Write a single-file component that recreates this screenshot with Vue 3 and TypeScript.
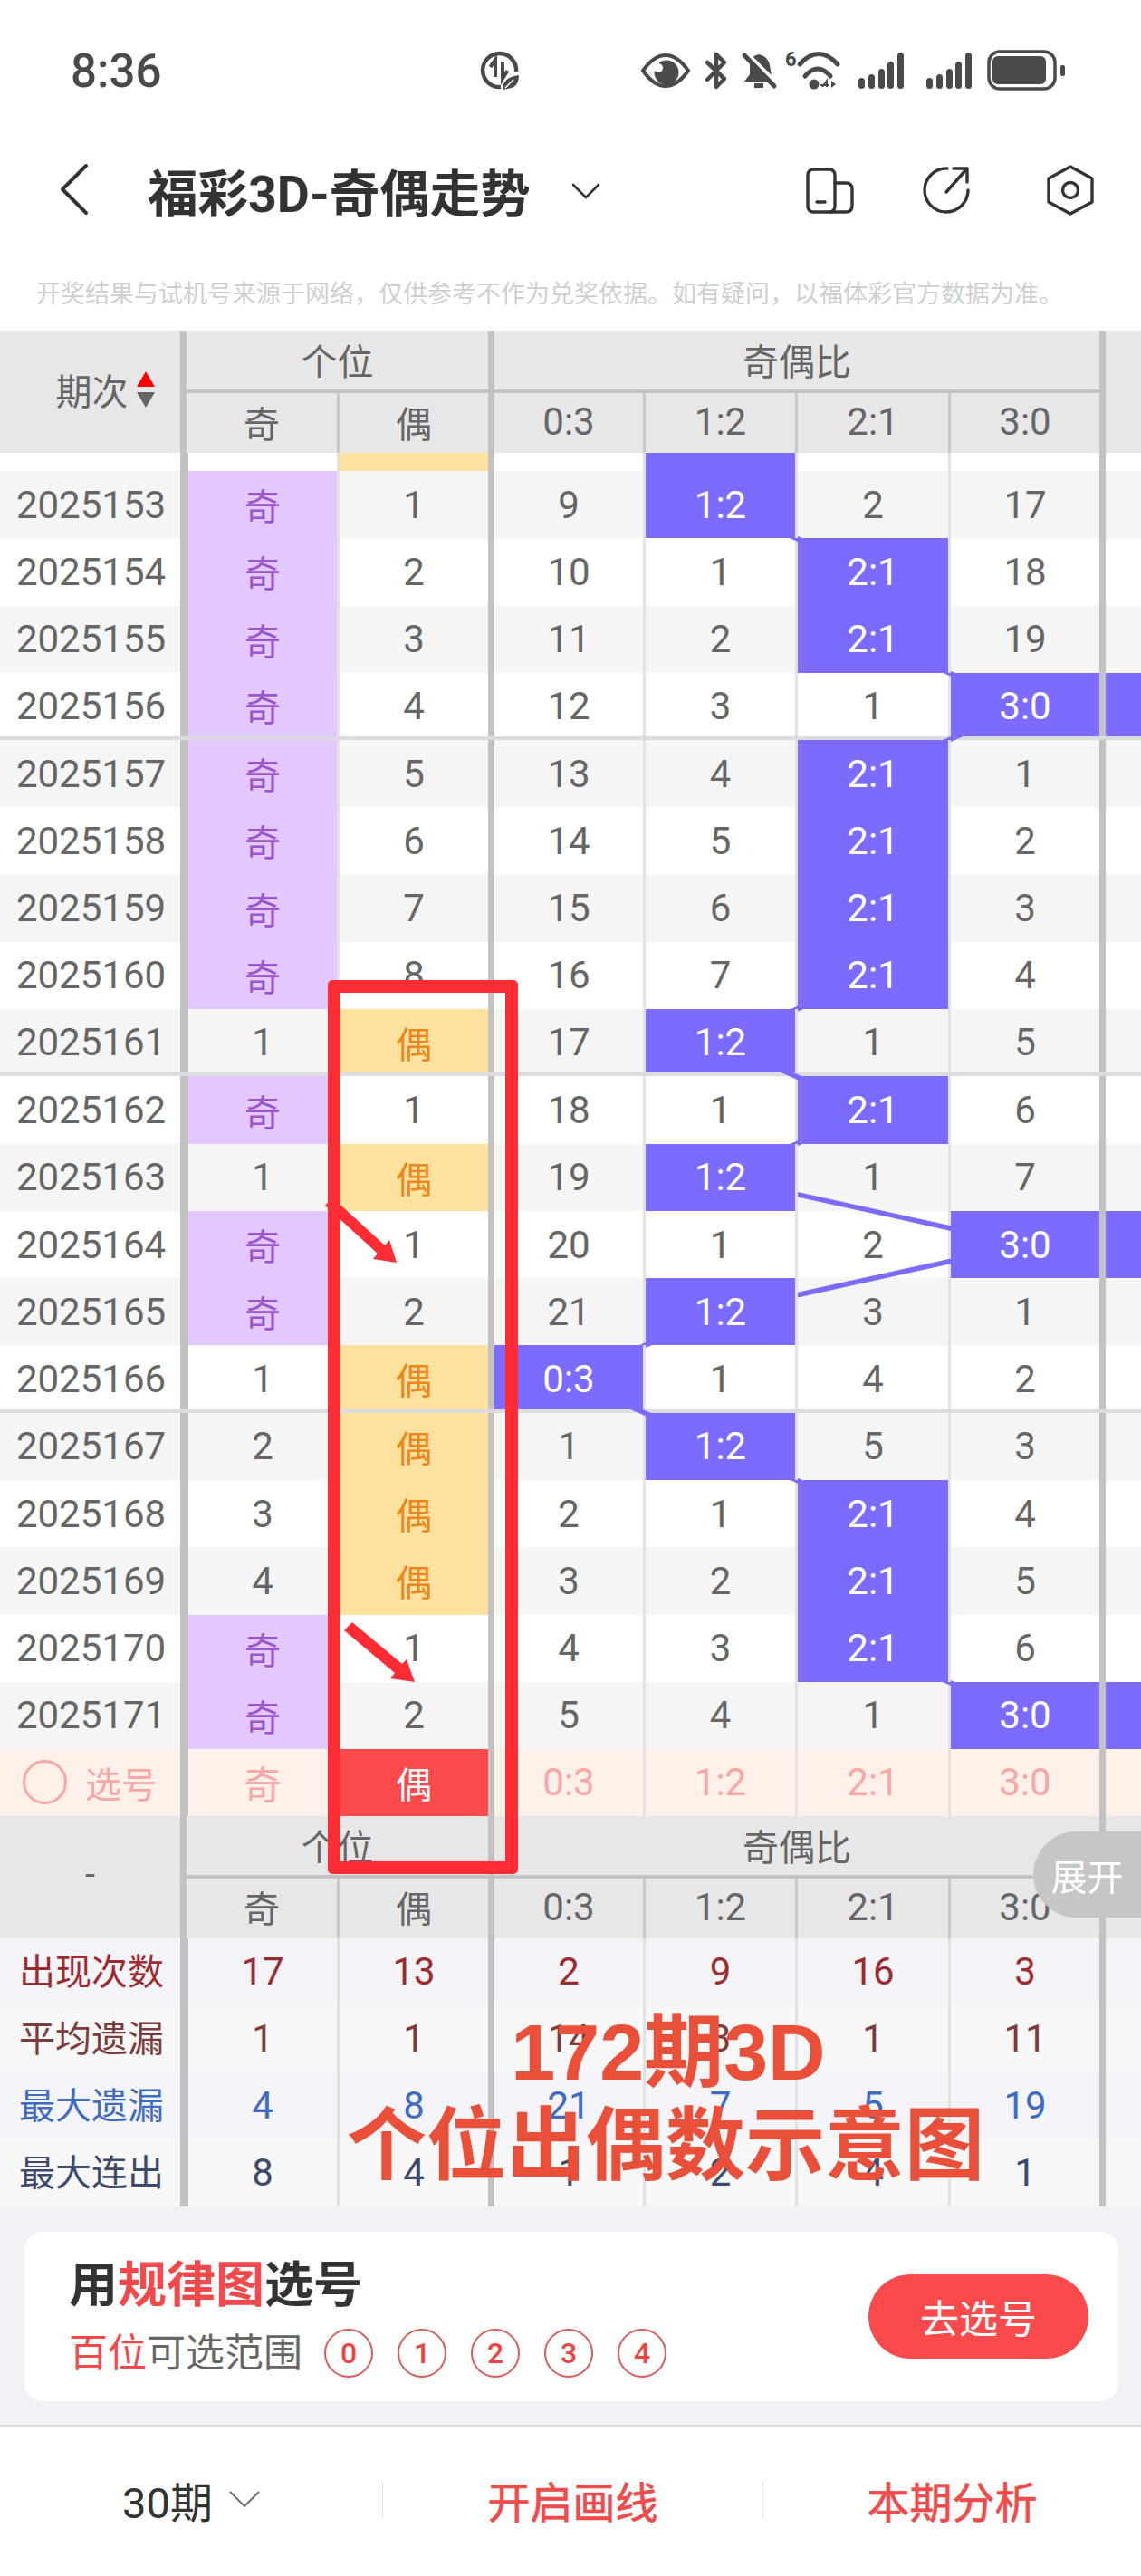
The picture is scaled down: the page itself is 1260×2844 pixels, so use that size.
<script setup lang="ts">
import { computed } from 'vue'

interface Row {
  p: number
  a: string
  b: string
  r: string[]
}

const rows: Row[] = [
  { p: 2025153, a: '奇', b: '1', r: ['9', '1:2', '2', '17'] },
  { p: 2025154, a: '奇', b: '2', r: ['10', '1', '2:1', '18'] },
  { p: 2025155, a: '奇', b: '3', r: ['11', '2', '2:1', '19'] },
  { p: 2025156, a: '奇', b: '4', r: ['12', '3', '1', '3:0'] },
  { p: 2025157, a: '奇', b: '5', r: ['13', '4', '2:1', '1'] },
  { p: 2025158, a: '奇', b: '6', r: ['14', '5', '2:1', '2'] },
  { p: 2025159, a: '奇', b: '7', r: ['15', '6', '2:1', '3'] },
  { p: 2025160, a: '奇', b: '8', r: ['16', '7', '2:1', '4'] },
  { p: 2025161, a: '1', b: '偶', r: ['17', '1:2', '1', '5'] },
  { p: 2025162, a: '奇', b: '1', r: ['18', '1', '2:1', '6'] },
  { p: 2025163, a: '1', b: '偶', r: ['19', '1:2', '1', '7'] },
  { p: 2025164, a: '奇', b: '1', r: ['20', '1', '2', '3:0'] },
  { p: 2025165, a: '奇', b: '2', r: ['21', '1:2', '3', '1'] },
  { p: 2025166, a: '1', b: '偶', r: ['0:3', '1', '4', '2'] },
  { p: 2025167, a: '2', b: '偶', r: ['1', '1:2', '5', '3'] },
  { p: 2025168, a: '3', b: '偶', r: ['2', '1', '2:1', '4'] },
  { p: 2025169, a: '4', b: '偶', r: ['3', '2', '2:1', '5'] },
  { p: 2025170, a: '奇', b: '1', r: ['4', '3', '2:1', '6'] },
  { p: 2025171, a: '奇', b: '2', r: ['5', '4', '1', '3:0'] }
]

const subHead = ['奇', '偶', '0:3', '1:2', '2:1', '3:0']

const stats = [
  { label: '出现次数', cls: 'st-red', v: ['17', '13', '2', '9', '16', '3'] },
  { label: '平均遗漏', cls: 'st-brown', v: ['1', '1', '14', '3', '1', '11'] },
  { label: '最大遗漏', cls: 'st-blue', v: ['4', '8', '21', '7', '5', '19'] },
  { label: '最大连出', cls: 'st-slate', v: ['8', '4', '1', '2', '4', '1'] }
]

const rowH = 74.28
const colX = [628, 795.5, 963.5, 1132]

// 走势线，穿过每行命中的格子中心
const trend = computed(() => {
  const pts = ['795.5,10']
  rows.forEach((row, i) => {
    const hit = row.r.findIndex((v) => v.includes(':'))
    pts.push(`${colX[hit]},${20 + i * rowH + rowH / 2}`)
  })
  return pts.join(' ')
})

const isHit = (v: string) => v.includes(':')
</script>

<template>
  <div class="page">
    <!-- 状态栏 -->
    <div class="status">
      <span class="time">8:36</span>
      <svg class="ic-data" width="50" height="48" viewBox="528 54 50 48" fill="none" stroke="#4a4a4a" stroke-width="4.5">
        <path d="M570 79 A18.5 18.5 0 1 0 553 96" />
        <path d="M547 85V66L541.5 74" stroke-width="4" />
        <path d="M555 68V87L560.5 78" stroke-width="4" />
        <path d="M555 99Q555 85 573 83Q573 97 560 98Z" fill="#4a4a4a" stroke="none" />
        <path d="M558 97L567 88" stroke="#fff" stroke-width="1.5" />
      </svg>
      <svg class="ic-cluster" width="485" height="50" viewBox="700 52 485 50" fill="none" stroke="#4a4a4a">
        <path d="M710 78Q722 61 735 61Q748 61 760 78Q748 95 735 95Q722 95 710 78Z" stroke-width="4" />
        <circle cx="736" cy="80" r="13.5" fill="#4a4a4a" stroke="none" />
        <circle cx="727" cy="75" r="5" fill="#fff" stroke="none" />
        <path d="M781 69L800 87L791 96V60L800 69L781 88" stroke-width="4.5" stroke-linejoin="round" stroke-linecap="round" />
        <path d="M822 90L828 82V72Q828 62 838 60Q848 62 850 72L853 90Z" fill="#4a4a4a" stroke="none" />
        <rect x="833" y="92" width="10" height="5" fill="#4a4a4a" stroke="none" />
        <path d="M826 60L858 92" stroke="#fff" stroke-width="4" />
        <path d="M822 61L855 95" stroke-width="5" stroke-linecap="round" />
        <text x="867" y="73" class="six">6</text>
        <path d="M883 71Q904 48 925 71" stroke-width="5" stroke-linecap="round" />
        <path d="M889 84Q903 68 917 84" stroke-width="5" stroke-linecap="round" />
        <circle cx="899" cy="93" r="5.5" fill="#4a4a4a" stroke="none" />
        <path d="M908 96L913 89V96M906 94H915" stroke-width="2" />
        <path d="M918 89V97L923 93Z" fill="#4a4a4a" stroke="none" />
        <g fill="#4a4a4a" stroke="none">
          <rect x="948" y="86" width="7" height="12" rx="3.5" />
          <rect x="959" y="82" width="7" height="16" rx="3.5" />
          <rect x="970" y="76" width="7" height="22" rx="3.5" />
          <rect x="980" y="68" width="7" height="30" rx="3.5" />
          <rect x="991" y="58" width="7" height="40" rx="3.5" />
          <rect x="1023" y="86" width="7" height="12" rx="3.5" />
          <rect x="1034" y="82" width="7" height="16" rx="3.5" />
          <rect x="1045" y="76" width="7" height="22" rx="3.5" />
          <rect x="1055" y="68" width="7" height="30" rx="3.5" />
          <rect x="1066" y="58" width="7" height="40" rx="3.5" />
          <rect x="1096" y="62" width="59" height="31" rx="6" />
          <rect x="1171" y="72" width="5" height="12" rx="2" />
        </g>
        <rect x="1092" y="57" width="73" height="41" rx="12" stroke-width="3.5" />
      </svg>
    </div>

    <!-- 导航 -->
    <div class="nav">
      <svg width="34" height="64" viewBox="66 180 34 64" fill="none" stroke="#333" stroke-width="4" stroke-linecap="round" stroke-linejoin="round">
        <path d="M95 185L69 211L95 237" />
      </svg>
      <div class="nav-title">福彩3D-奇偶走势</div>
      <svg width="34" height="24" viewBox="630 198 34 24" fill="none" stroke="#333" stroke-width="2.6" stroke-linecap="round" stroke-linejoin="round">
        <path d="M633 204L647 218L661 204" />
      </svg>
      <svg class="nav-actions" width="328" height="64" viewBox="885 180 328 64" fill="none" stroke="#333" stroke-width="3.4" stroke-linecap="round" stroke-linejoin="round">
        <rect x="892" y="189" width="30" height="47" rx="6" />
        <path d="M922 204H934Q941 204 941 211V229Q941 236 934 236H916" />
        <path d="M902 225H911" />
        <path d="M1046 188A24 24 0 1 0 1069 212" />
        <path d="M1045 214L1068 188M1053 188H1068V203" />
        <path d="M1182 186L1206 199V225L1182 238L1158 225V199Z" />
        <circle cx="1182" cy="212" r="8.5" />
      </svg>
    </div>

    <div class="notice">开奖结果与试机号来源于网络，仅供参考不作为兑奖依据。如有疑问，以福体彩官方数据为准。</div>

    <!-- 顶部表头 -->
    <div class="head">
      <div class="hc head-first sep-h">
        期次
        <span class="sort"><i class="up"></i><i class="down"></i></span>
      </div>
      <div class="hc group span2 sep-h">个位</div>
      <div class="hc group span4 sep-h">奇偶比</div>
      <div class="hc head-last"></div>
      <div
        v-for="(h, i) in subHead"
        :key="h"
        class="hc"
        :class="[i === 1 || i === 5 ? 'sep-h' : 'sep-l', i > 1 ? 'hc-num' : '']"
      >{{ h }}</div>
    </div>

    <!-- 数据行 -->
    <div class="rows">
      <div class="row row-cut">
        <div></div>
        <div></div>
        <div class="even-on"></div>
        <div></div>
        <div class="hit"></div>
        <div></div>
        <div></div>
        <div></div>
      </div>
      <div
        v-for="row in rows"
        :key="row.p"
        class="row"
        :class="{ alt: row.p % 2 === 1, 'row-end': row.p % 5 === 1 && row.p !== 2025171 }"
      >
        <div>{{ row.p }}</div>
        <div :class="{ 'odd-on': row.a === '奇' }">{{ row.a }}</div>
        <div :class="{ 'even-on': row.b === '偶' }">{{ row.b }}</div>
        <div v-for="(v, i) in row.r" :key="i" :class="{ hit: isHit(v) }">{{ v }}</div>
        <div :class="{ hit: isHit(row.r[3]) }"></div>
      </div>

      <svg class="trend" width="1260" height="1430" viewBox="0 0 1260 1430">
        <polyline :points="trend" fill="none" stroke="#7b6bff" stroke-width="5.5" />
      </svg>

      <div class="row pick">
        <div class="pick-first"><span class="ring"></span>选号</div>
        <div>奇</div>
        <div class="pick-on">偶</div>
        <div>0:3</div>
        <div>1:2</div>
        <div>2:1</div>
        <div>3:0</div>
        <div></div>
      </div>
    </div>

    <!-- 底部表头 -->
    <div class="head">
      <div class="hc head-first sep-h head-dash">-</div>
      <div class="hc group span2 sep-h">个位</div>
      <div class="hc group span4 sep-h">奇偶比</div>
      <div class="hc head-last"></div>
      <div
        v-for="(h, i) in subHead"
        :key="h"
        class="hc"
        :class="[i === 1 || i === 5 ? 'sep-h' : 'sep-l', i > 1 ? 'hc-num' : '']"
      >{{ h }}</div>
    </div>

    <!-- 统计 -->
    <div v-for="(s, i) in stats" :key="s.label" class="row stat" :class="[s.cls, i % 2 ? 'stat-b' : 'stat-a']">
      <div>{{ s.label }}</div>
      <div v-for="(v, j) in s.v" :key="j">{{ v }}</div>
      <div></div>
    </div>

    <!-- 选号卡片 -->
    <div class="card-wrap">
      <div class="card">
        <div class="card-text">
          <div class="card-title">用<em>规律图</em>选号</div>
          <div class="card-sub">
            <span><em>百位</em>可选范围</span>
            <span class="balls">
              <b v-for="n in 5" :key="n">{{ n - 1 }}</b>
            </span>
          </div>
        </div>
        <div class="go">去选号</div>
      </div>
    </div>

    <!-- 底栏 -->
    <div class="footer">
      <div class="foot-item foot-dark">
        30期
        <svg width="34" height="20" viewBox="0 0 34 20" fill="none" stroke="#666" stroke-width="1.8">
          <path d="M1 2L17 18L33 2" />
        </svg>
      </div>
      <div class="foot-item foot-line">开启画线</div>
      <div class="foot-item foot-line">本期分析</div>
    </div>

    <!-- 叠加标注 -->
    <div class="pill">展开</div>
    <div class="red-box"></div>
    <svg class="arrows" width="140" height="560" viewBox="340 1310 140 560" fill="#ff2d33">
      <polygon points="367,1322 425,1375 430,1369 438,1394 412,1390 417,1384 359,1331" />
      <polygon points="389,1791 444,1837 449,1832 458,1857 431,1853 436,1847 380,1800" />
    </svg>
    <div class="note">
      <div class="note-top">172期3D</div>
      <div>个位出偶数示意图</div>
    </div>
  </div>
</template>

<style>
html,
body {
  margin: 0;
  padding: 0;
  background: #fff;
}
</style>

<style scoped>
.page {
  position: relative;
  width: 1260px;
  height: 2844px;
  overflow: hidden;
  background: #fff;
  font-family: Roboto, "Noto Sans CJK SC", sans-serif;
  color: #666;
}

.status {
  height: 158px;
  box-sizing: border-box;
  padding: 54px 0 0 78px;
  display: flex;
  align-items: flex-start;
}

.time {
  width: 450px;
  font-size: 51px;
  line-height: 50px;
  color: #4a4a4a;
  font-weight: 500;
}

.ic-cluster {
  margin-left: 122px;
  margin-top: -2px;
}

.six {
  font-family: Roboto, sans-serif;
  font-size: 22px;
  font-weight: 700;
  fill: #4a4a4a;
  stroke: none;
}

.nav {
  height: 104px;
  box-sizing: border-box;
  padding: 0 47px 0 66px;
  display: flex;
  align-items: center;
}

.nav-title {
  margin-left: 63px;
  width: 467px;
  font-size: 55.5px;
  font-weight: 700;
  color: #333;
  white-space: nowrap;
}

.nav-actions {
  margin-left: auto;
}

.notice {
  height: 103px;
  box-sizing: border-box;
  padding: 47px 0 0 40px;
  font-size: 27px;
  line-height: 32px;
  color: #cfcfcf;
  white-space: nowrap;
}

/* 表头 */
.head {
  display: grid;
  grid-template-columns: 206px 169px 171px 167px 168px 169px 171px 39px;
  grid-template-rows: 69px 66px;
  background: #e7e7e7;
}

.hc {
  display: flex;
  align-items: center;
  justify-content: center;
  box-sizing: border-box;
  padding-bottom: 3px;
  font-size: 40px;
  color: #666;
}

.hc-num {
  font-size: 42px;
}

.sep-h {
  border-right: 7px solid #c2c2c2;
}

.sep-l {
  border-right: 3px solid #c8c8c8;
}

.head-first {
  grid-row: span 2;
  gap: 9px;
  padding-left: 33px;
  padding-bottom: 6px;
}

.head-dash {
  padding-left: 0;
}

.head-last {
  grid-row: span 2;
}

.group {
  box-shadow: inset 0 -4px 0 #c2c2c2;
  padding-bottom: 5px;
}

.span2 {
  grid-column: span 2;
}

.span4 {
  grid-column: span 4;
}

.sort {
  display: flex;
  flex-direction: column;
  gap: 6px;
}

.sort i {
  display: block;
  width: 0;
  height: 0;
  border-left: 10px solid transparent;
  border-right: 10px solid transparent;
}

.up {
  border-bottom: 17px solid #f00;
}

.down {
  border-top: 17px solid #666;
}

/* 数据行 */
.rows {
  position: relative;
}

.trend {
  position: absolute;
  left: 0;
  top: 0;
  z-index: 1;
}

.row {
  display: grid;
  grid-template-columns: 206px 169px 171px 167px 168px 169px 171px 39px;
  height: 74.28px;
  box-sizing: border-box;
  background: #fff;
  font-size: 42px;
  color: #666;
}

.row > div {
  display: flex;
  align-items: center;
  justify-content: center;
  box-sizing: border-box;
  border-right: 3px solid #e2e2e2;
}

.row > div:nth-child(1),
.row > div:nth-child(3),
.row > div:nth-child(7) {
  border-right: 7px solid #c2c2c2;
}

.row > div:nth-child(1) {
  padding-left: 2px;
}

.row > div:nth-child(2) {
  border-left: 2px solid #c2c2c2;
}

.row > div:nth-child(8) {
  border-right: 0;
}

.row-cut {
  height: 20px;
}

.alt {
  background: #f5f5f5;
}

.row-end {
  border-bottom: 4px solid #dcdce0;
}

.row-end > div {
  padding-top: 3px;
}

.odd-on {
  background: #e2c8fd;
  color: #9a55cf;
  font-size: 40px;
}

.even-on {
  background: #fde29f;
  color: #ee861c;
  font-size: 40px;
}

.hit {
  position: relative;
  z-index: 2;
  background: #7b6bff;
  color: #fff;
}

/* 选号行 */
.pick {
  height: 73.7px;
  background: #fff0ea;
  color: #f9a6a6;
  position: relative;
  z-index: 2;
}

.row.pick > div {
  border-right-color: #eadfd9;
}

.row.pick > div:nth-child(1),
.row.pick > div:nth-child(3),
.row.pick > div:nth-child(7) {
  border-right-color: #c2c2c2;
}

.row.pick > div:nth-child(8) {
  border-right: 0;
}

.row.pick .pick-first {
  font-size: 40px;
  gap: 20px;
  padding: 0;
}

.ring {
  width: 43px;
  height: 43px;
  border: 3px solid #f9a6a6;
  border-radius: 50%;
}

.pick-on {
  background: #fb4a4c;
  color: #fff;
  font-size: 40px;
}

/* 统计行 */
.stat {
  height: 74px;
}

.stat-a {
  background: #f3f3f8;
}

.stat-b {
  background: #f7f7f7;
}

.row.stat > div:first-child {
  font-size: 40px;
  white-space: nowrap;
  padding: 0 0 5px 3px;
}

.st-red {
  color: #9c2b2f;
}

.st-brown {
  color: #7d3b3b;
}

.st-blue {
  color: #3f6cc2;
}

.st-slate {
  color: #3e4a6c;
}

/* 卡片 */
.card-wrap {
  height: 241px;
  box-sizing: border-box;
  padding: 28px 25px 26px 27px;
  background: #f1f2f6;
}

.card {
  height: 187px;
  box-sizing: border-box;
  padding: 29px 33px 0 49px;
  background: #fff;
  border-radius: 20px;
  display: flex;
  justify-content: space-between;
  align-items: flex-start;
}

.card em {
  font-style: normal;
  color: #f4484a;
}

.card-title {
  font-size: 54px;
  line-height: 62px;
  font-weight: 700;
  color: #333;
}

.card-sub {
  margin-top: 14px;
  display: flex;
  align-items: center;
  gap: 24px;
  font-size: 43px;
  line-height: 58px;
  color: #666;
}

.balls {
  display: flex;
  gap: 27px;
}

.balls b {
  width: 54px;
  height: 54px;
  box-sizing: border-box;
  border: 2px solid #dd5a5a;
  border-radius: 50%;
  display: flex;
  align-items: center;
  justify-content: center;
  font-size: 32px;
  font-weight: 500;
  color: #ef4343;
}

.go {
  margin-top: 18px;
  width: 243px;
  height: 93px;
  border-radius: 47px;
  background: #fb4a4c;
  color: #fff;
  font-size: 43px;
  display: flex;
  align-items: center;
  justify-content: center;
}

/* 底栏 */
.footer {
  height: 167px;
  box-sizing: border-box;
  border-top: 2px solid #dcdcdc;
  padding-bottom: 4px;
  display: grid;
  grid-template-columns: 422px 420px 418px;
  align-items: center;
}

.foot-item {
  height: 41px;
  display: flex;
  align-items: center;
  justify-content: center;
  font-size: 47px;
  white-space: nowrap;
}

.foot-dark {
  color: #333;
  gap: 18px;
}

.foot-line {
  border-left: 1px solid #e2e2e2;
  color: #ee4b4b;
  -webkit-text-stroke: 0.7px #ee4b4b;
}

/* 叠加内容 */
.pill {
  position: absolute;
  right: 0;
  top: 2022px;
  z-index: 4;
  width: 119px;
  height: 95px;
  border-radius: 48px 0 0 48px;
  background: #c6c6c6;
  color: #fff;
  font-size: 40px;
  display: flex;
  align-items: center;
  justify-content: center;
}

.red-box {
  position: absolute;
  left: 362px;
  top: 1082px;
  z-index: 5;
  width: 210px;
  height: 987px;
  box-sizing: border-box;
  border: 14px solid #ff2d33;
  border-radius: 5px;
}

.arrows {
  position: absolute;
  left: 340px;
  top: 1310px;
  z-index: 5;
}

.note {
  position: absolute;
  left: 235px;
  top: 2214px;
  z-index: 6;
  width: 1000px;
  text-align: center;
  font-family: "Liberation Sans", "Noto Sans CJK SC", sans-serif;
  font-size: 88px;
  line-height: 103px;
  font-weight: 700;
  color: #ea4f39;
}

.note-top {
  padding-left: 6px;
}
</style>
